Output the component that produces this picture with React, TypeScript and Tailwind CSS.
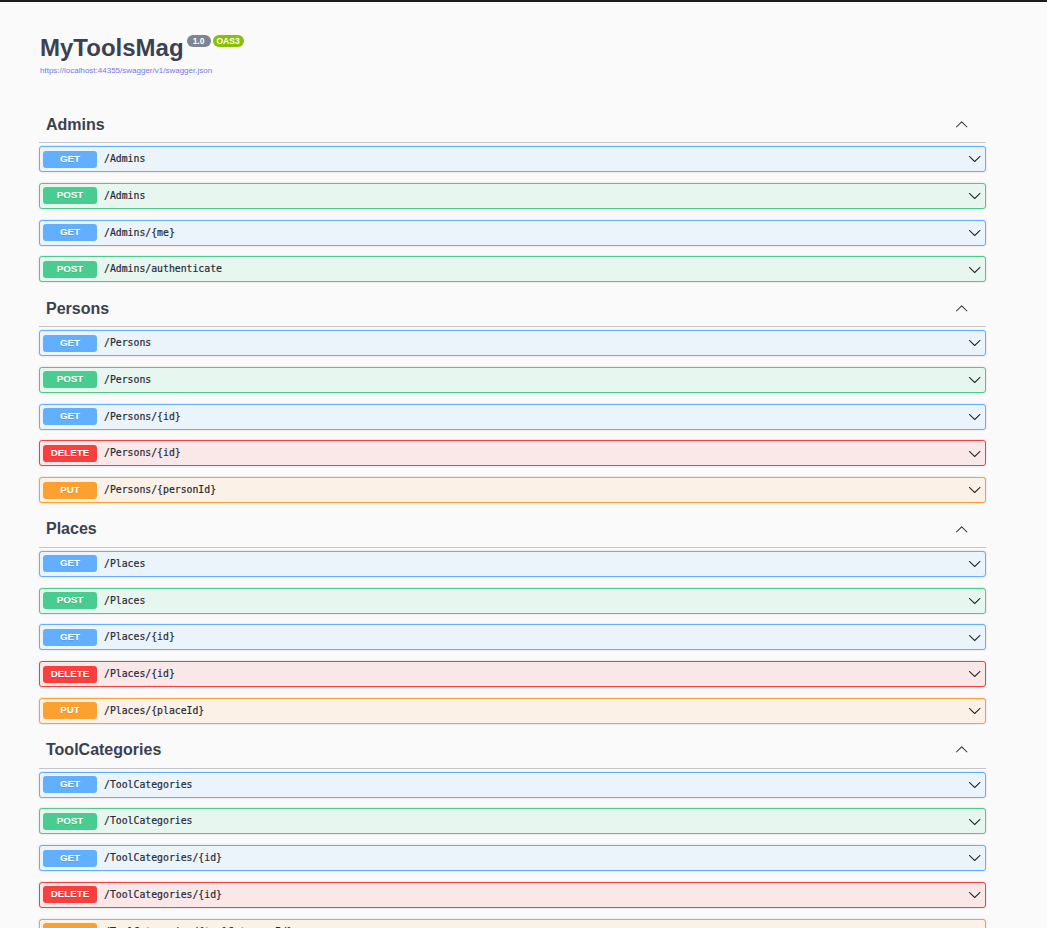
import React from "react";

type Method = "GET" | "POST" | "PUT" | "DELETE";

const styles: Record<Method, { row: string; badge: string }> = {
  GET: { row: "bg-[#ebf3fb] border-[#61affe]", badge: "bg-[#61affe]" },
  POST: { row: "bg-[#e8f6f0] border-[#49cc90]", badge: "bg-[#49cc90]" },
  PUT: { row: "bg-[#fbf1e6] border-[#fca130]", badge: "bg-[#fca130]" },
  DELETE: { row: "bg-[#fae7e7] border-[#f93e3e]", badge: "bg-[#f93e3e]" },
};

const sections: { name: string; ops: [Method, string][] }[] = [
  {
    name: "Admins",
    ops: [
      ["GET", "/Admins"],
      ["POST", "/Admins"],
      ["GET", "/Admins/{me}"],
      ["POST", "/Admins/authenticate"],
    ],
  },
  {
    name: "Persons",
    ops: [
      ["GET", "/Persons"],
      ["POST", "/Persons"],
      ["GET", "/Persons/{id}"],
      ["DELETE", "/Persons/{id}"],
      ["PUT", "/Persons/{personId}"],
    ],
  },
  {
    name: "Places",
    ops: [
      ["GET", "/Places"],
      ["POST", "/Places"],
      ["GET", "/Places/{id}"],
      ["DELETE", "/Places/{id}"],
      ["PUT", "/Places/{placeId}"],
    ],
  },
  {
    name: "ToolCategories",
    ops: [
      ["GET", "/ToolCategories"],
      ["POST", "/ToolCategories"],
      ["GET", "/ToolCategories/{id}"],
      ["DELETE", "/ToolCategories/{id}"],
      ["PUT", "/ToolCategories/{toolCategoryId}"],
    ],
  },
];

const ARROW =
  "M17.418 6.109c.272-.268.709-.268.979 0s.271.701 0 .969l-7.908 7.83c-.27.268-.707.268-.979 0l-7.908-7.83c-.27-.268-.27-.701 0-.969.271-.268.709-.268.979 0L10 13.25l7.418-7.141z";

function Arrow({ up = false }: { up?: boolean }) {
  return (
    <svg
      viewBox="0 0 20 20"
      width="13.4"
      height="13.4"
      className={up ? "rotate-180" : ""}
      fill="#1f1f1f"
    >
      <path d={ARROW} />
    </svg>
  );
}

function Row({ method, path }: { method: Method; path: string }) {
  const s = styles[method];
  return (
    <div
      className={`flex items-center h-[26px] mb-[10.75px] border rounded-[3px] pl-[3px] pr-[4px] shadow-[0_0_2px_rgba(0,0,0,0.19)] ${s.row}`}
    >
      <div
        className={`w-[54px] h-[17px] rounded-[3px] flex items-center justify-center text-white font-bold text-[9.8px] [text-shadow:0_1px_0_rgba(0,0,0,0.1)] ${s.badge}`}
        style={{ fontFamily: '"Liberation Sans", Arial, sans-serif' }}
      >
        {method}
      </div>
      <div
        className="ml-[7px] pt-[1px] flex-1 text-[#262a35] text-[9.8px] font-normal [-webkit-text-stroke:0.2px_#262a35]"
        style={{ fontFamily: '"DejaVu Sans Mono", "Liberation Mono", monospace' }}
      >
        {path}
      </div>
      <Arrow />
    </div>
  );
}

export default function App() {
  return (
    <div
      className="min-h-screen bg-[#fafafa] text-[#3b4151]"
      style={{ fontFamily: '"Liberation Sans", Arial, sans-serif' }}
    >
      <div className="h-[2px] bg-[#1b1b1b]" />
      <div className="pl-[39px]">
        <div className="w-[947px]">
          <div className="mt-[32px] flex items-start">
            <h2 className="pl-[1px] text-[24px] leading-[28px] font-bold text-[#3b4151]">MyToolsMag</h2>
            <span className="ml-[3px] mt-[1px] w-[24px] h-[12px] rounded-full bg-[#7d8492] text-white text-[8.5px] font-bold flex items-center justify-center leading-none">
              1.0
            </span>
            <span className="ml-[2px] mt-[1px] w-[31px] h-[12px] rounded-full bg-[#89bf04] text-white text-[8.5px] font-bold flex items-center justify-center leading-none">
              OAS3
            </span>
          </div>
          <div className="mt-[4px] pl-[1px] text-[8px] leading-[10px] text-[#7479e6]">
            https://localhost:44355/swagger/v1/swagger.json
          </div>
          <div className="mt-[33px]">
            {sections.map((sec) => (
              <div key={sec.name}>
                <div className="flex items-center border-b border-[#c4c5c9] pt-[3.5px] pb-[5.5px] pl-[7px] pr-[18px]">
                  <span className="flex-1 text-[16px] leading-[24px] font-bold text-[#3b4151]">
                    {sec.name}
                  </span>
                  <Arrow up />
                </div>
                <div className="mt-[3px]">
                  {sec.ops.map(([m, p], i) => (
                    <Row key={i} method={m} path={p} />
                  ))}
                </div>
              </div>
            ))}
          </div>
        </div>
      </div>
    </div>
  );
}
